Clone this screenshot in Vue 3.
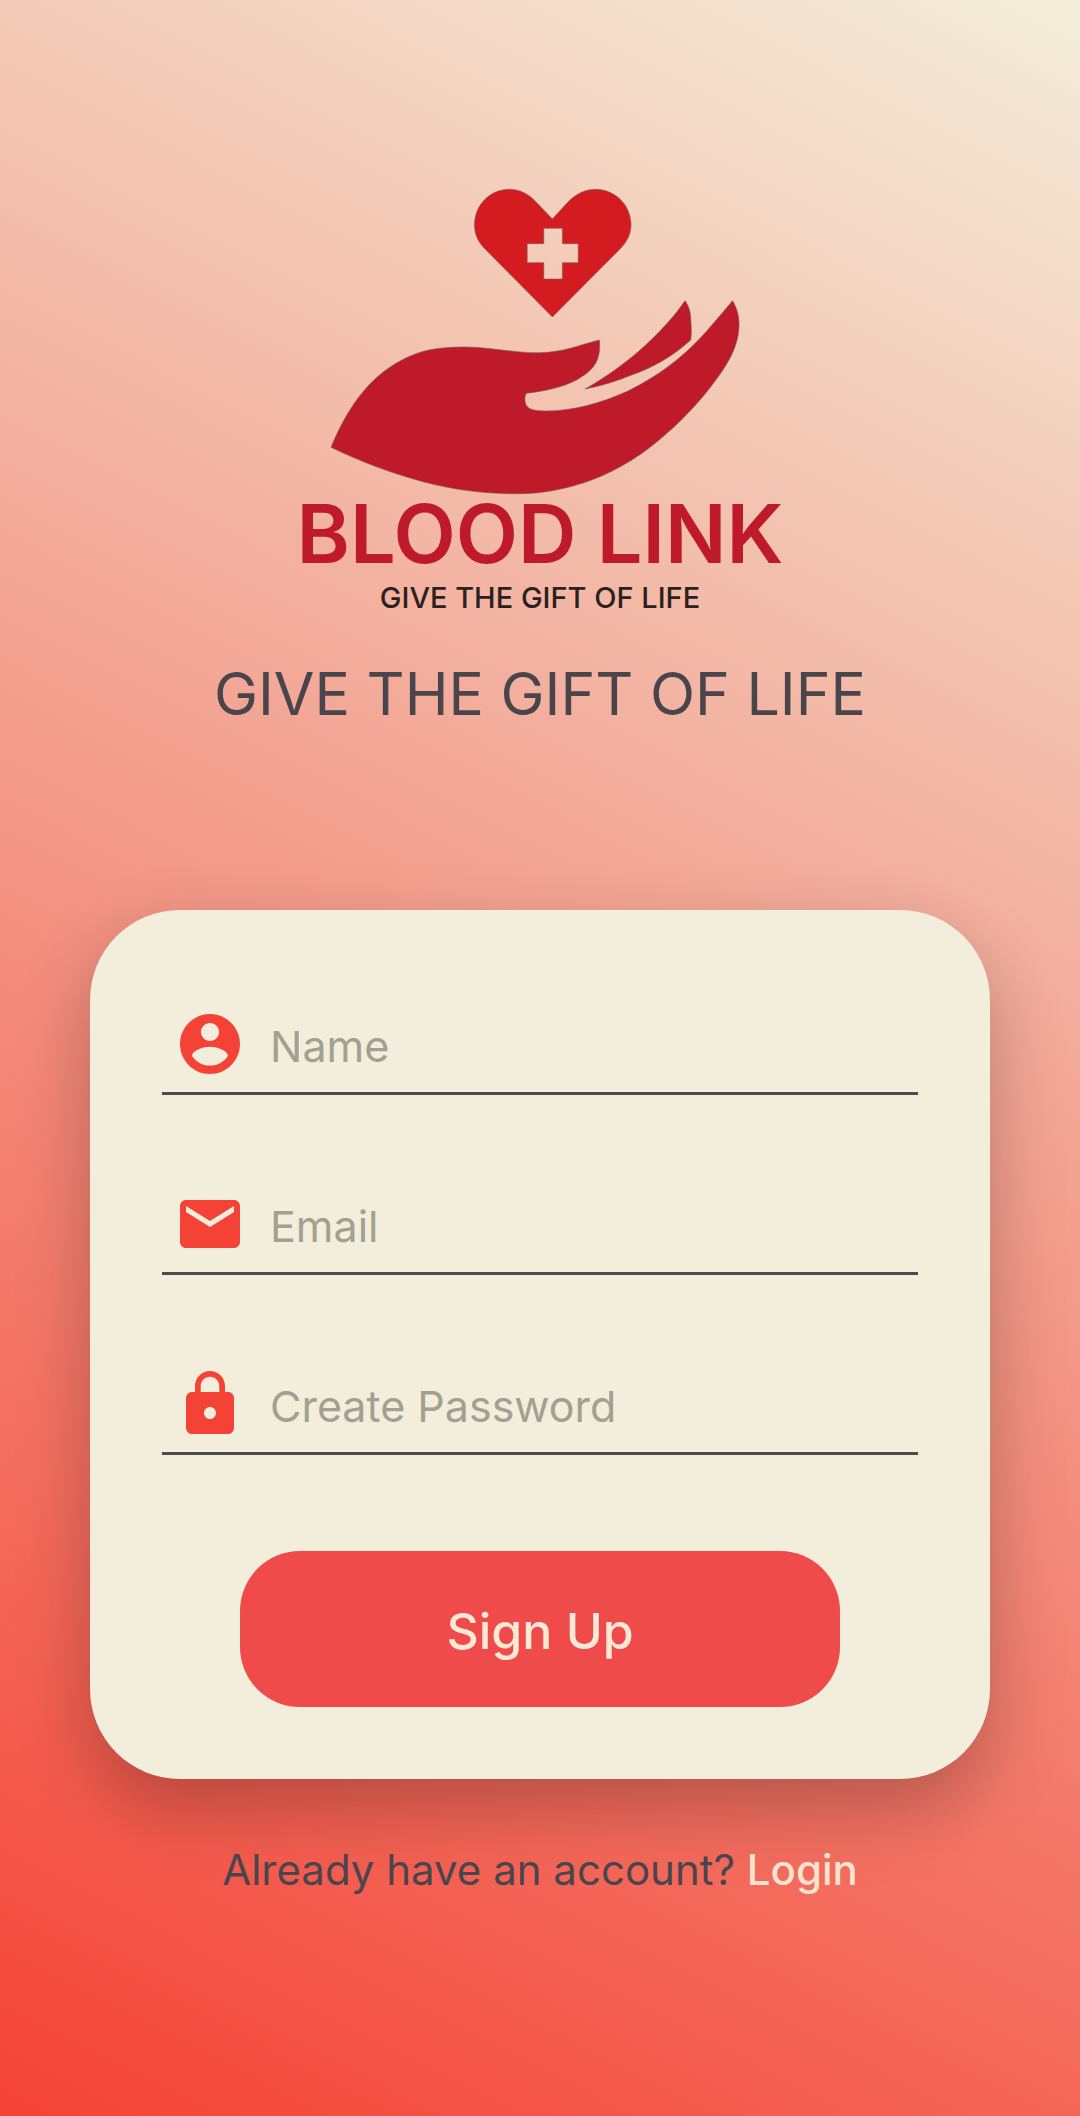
<script setup>
import { reactive } from 'vue'

const fields = [
  {
    id: 'name',
    label: 'Name',
    type: 'text',
    icon: 'M12 2C6.48 2 2 6.48 2 12s4.48 10 10 10 10-4.48 10-10S17.52 2 12 2zm0 3c1.66 0 3 1.34 3 3s-1.34 3-3 3-3-1.34-3-3 1.34-3 3-3zm0 14.2c-2.5 0-4.71-1.28-6-3.22.03-1.99 4-3.08 6-3.08 1.99 0 5.97 1.09 6 3.08-1.29 1.94-3.5 3.22-6 3.22z'
  },
  {
    id: 'email',
    label: 'Email',
    type: 'email',
    icon: 'M20 4H4c-1.1 0-1.99.9-1.99 2L2 18c0 1.1.9 2 2 2h16c1.1 0 2-.9 2-2V6c0-1.1-.9-2-2-2zm0 4l-8 5-8-5V6l8 5 8-5v2z'
  },
  {
    id: 'password',
    label: 'Create Password',
    type: 'password',
    icon: 'M18 8h-1V6c0-2.76-2.24-5-5-5S7 3.24 7 6v2H6c-1.1 0-2 .9-2 2v10c0 1.1.9 2 2 2h12c1.1 0 2-.9 2-2V10c0-1.1-.9-2-2-2zm-6 9c-1.1 0-2-.9-2-2s.9-2 2-2 2 .9 2 2-.9 2-2 2zm3.1-9H8.9V6c0-1.71 1.39-3.1 3.1-3.1 1.71 0 3.1 1.39 3.1 3.1v2z'
  }
]

const form = reactive({ name: '', email: '', password: '' })
</script>

<template>
  <main class="page">
    <header class="brand">
      <svg class="emblem" viewBox="0 0 540 334" aria-hidden="true">
        <path
          class="heart"
          fill-rule="evenodd"
          d="M282.4 49L267 33C259 24 250 19.3 239.5 19.3C220 19.3 204.5 35 204.5 55C204.5 64 208 72 215 79L282.4 147L350 79C357 72 361 64 361 55C361 35 345 19.3 325.4 19.3C315 19.3 306 24 298 32ZM273.8 58.3H292.4V73.7H308.2V92.7H292.4V109H273.8V92.7H257.2V73.7H273.8Z"
        />
        <path
          class="hand"
          d="M61 277.3C80 232 103 203 138 187C156 178.500 175 177 196.300 177C222 177.500 246 183 268.600 182.700C293 182.500 309 175 329.500 170C331 191 324 200 306.500 210C291 218 274 221 256.500 223.300C254.500 226 254.500 230 255.500 233.300C257 239 263 241 275.500 241C304 241 331 233 358 221C396 202 420 181 442.500 154.300C449.500 146.500 456 138.500 462.500 130.700C467 138 469.500 147 469 156.700C468 179 456 197 440.800 216.700C422 241 401 261 378.800 278.300C355 296 330 309 303 316C277 323 260 324 241 323.700C212 323.500 183 319.500 155 312.300C121 303 91 292 61 277.300Z"
        />
        <path
          class="hand"
          d="M415 130.700C419 136 421 143 420.800 151C421.500 158 421.500 164 420.800 170C402 187 382 198 361.600 205C346 211.500 331 216 315 219C358 195 386 166 400 150C406 143.500 410 137.500 415 130.700Z"
        />
      </svg>
      <p class="wordmark">BLOOD LINK</p>
      <p class="motto">GIVE THE GIFT OF LIFE</p>
    </header>

    <h1 class="headline">GIVE THE GIFT OF LIFE</h1>

    <form class="card" @submit.prevent>
      <div class="fields">
        <div v-for="field in fields" :key="field.id" class="field">
          <label :for="field.id" :aria-label="field.label">
            <svg class="icon" viewBox="0 0 24 24" aria-hidden="true">
              <path :d="field.icon" />
            </svg>
          </label>
          <input :id="field.id" v-model="form[field.id]" :type="field.type" :placeholder="field.label" />
        </div>
      </div>
      <button class="submit" type="submit">Sign Up</button>
    </form>

    <p class="switch">Already have an account? <a href="#login">Login</a></p>
  </main>
</template>

<style>
body {
  margin: 0;
}
</style>

<style scoped>
.page {
  box-sizing: border-box;
  min-height: 100vh;
  padding: 170px 90px 90px;
  display: flex;
  flex-direction: column;
  align-items: center;
  background: linear-gradient(207deg, #f3eeda, #f44336);
  color: #4a454d;
  font-family: Inter, "Liberation Sans", sans-serif;
}

.brand {
  display: flex;
  flex-direction: column;
  align-items: center;
  width: 100%;
  max-width: 540px;
}

.emblem {
  display: block;
  width: 100%;
}

.heart,
.hand {
  stroke: rgba(115, 95, 90, 0.6);
  stroke-width: 1;
}

.heart {
  fill: #d41b20;
}

.hand {
  fill: #be1a29;
}

.wordmark {
  margin: 0;
  color: #be1a29;
  font-size: 81px;
  font-weight: 600;
  line-height: 60px;
  white-space: nowrap;
}

.motto {
  margin: 18px 0 0;
  color: #2b211f;
  font-size: 29px;
  font-weight: 500;
  line-height: 32px;
}

.headline {
  margin: 44px 0 0;
  font-size: 59px;
  font-weight: 400;
  line-height: 72px;
  text-align: center;
}

.card {
  box-sizing: border-box;
  width: 100%;
  max-width: 900px;
  margin-top: 180px;
  padding: 98px 72px 72px;
  display: flex;
  flex-direction: column;
  align-items: center;
  gap: 96px;
  border-radius: 90px;
  background: #f3eedb;
  box-shadow: 0 30px 72px rgba(0, 0, 0, 0.25);
}

.fields {
  width: 100%;
  display: flex;
  flex-direction: column;
  gap: 93px;
}

.field {
  display: flex;
  align-items: center;
  gap: 24px;
  padding: 0 12px 12px;
  border-bottom: 3px solid #4c4a4c;
}

.icon {
  display: block;
  width: 72px;
  height: 72px;
  fill: #f44336;
}

input {
  box-sizing: border-box;
  flex: 1;
  min-width: 0;
  height: 72px;
  padding: 4px 0 0;
  border: 0;
  outline: 0;
  background: none;
  color: #4a454d;
  font-family: inherit;
  font-size: 43px;
  font-weight: 400;
}

input::placeholder {
  color: #a3a092;
  opacity: 1;
}

.submit {
  width: 600px;
  max-width: 100%;
  height: 156px;
  padding: 4px 0 0;
  border: 0;
  border-radius: 60px;
  background: #ef4b4a;
  color: #fbe8d5;
  font-family: inherit;
  font-size: 50px;
  font-weight: 500;
}

.switch {
  margin: 64px 0 0;
  font-size: 42px;
  font-weight: 400;
  line-height: 54px;
  text-align: center;
}

.switch a {
  color: #fbe3d0;
  font-weight: 500;
  text-decoration: none;
}
</style>
